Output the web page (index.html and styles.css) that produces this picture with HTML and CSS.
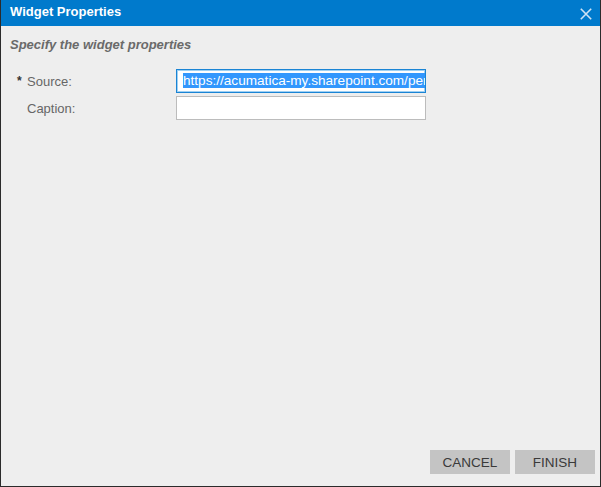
FILE: index.html
```html
<!DOCTYPE html>
<html>
<head>
<meta charset="utf-8">
<title>Widget Properties</title>
<link rel="stylesheet" href="styles.css">
</head>
<body>
<div class="dialog">
  <div class="titlebar">
    <span class="title">Widget Properties</span>
    <span class="close" aria-label="Close">
      <svg width="12" height="12" viewBox="0 0 12 12"><path d="M0.8 0.8 L11.2 11.2 M11.2 0.8 L0.8 11.2" stroke="#cfe3f4" stroke-width="1.6" fill="none"/></svg>
    </span>
  </div>
  <div class="content">
    <div class="subtitle">Specify the widget properties</div>
    <div class="form">
      <div class="row">
        <label class="label"><span class="req">*</span>Source:</label>
        <div class="field focused"><span class="sel">https://acumatica-my.sharepoint.com/per</span></div>
      </div>
      <div class="row">
        <label class="label"><span class="req"></span>Caption:</label>
        <div class="field"></div>
      </div>
    </div>
  </div>
  <div class="footer">
    <button class="btn">CANCEL</button>
    <button class="btn">FINISH</button>
  </div>
</div>
</body>
</html>
```
FILE: styles.css
```css
html, body {
  margin: 0;
  padding: 0;
  background: #eeeeee;
}
.dialog {
  box-sizing: border-box;
  width: 601px;
  height: 487px;
  border: 1px solid #2b2b2b;
  border-top: none;
  background: #eeeeee;
  display: flex;
  flex-direction: column;
  font-family: "Liberation Sans", Arial, sans-serif;
}
.titlebar {
  height: 26px;
  background: #007acc;
  display: flex;
  align-items: center;
  justify-content: space-between;
  padding: 0 8px 0 9px;
  flex-shrink: 0;
}
.title {
  color: #ffffff;
  font-weight: bold;
  font-size: 13px;
  line-height: 16px;
  margin-top: -2px;
}
.close {
  display: flex;
  width: 12px;
  height: 12px;
  margin-top: 2px;
}
.content {
  flex: 1;
  padding: 11px 0 0 0;
}
.subtitle {
  font-size: 13px;
  font-weight: bold;
  font-style: italic;
  color: #6a6a6a;
  line-height: 16px;
  padding-left: 9px;
}
.form {
  margin-top: 16px;
  display: flex;
  flex-direction: column;
  gap: 3px;
}
.row {
  display: flex;
  align-items: center;
}
.label {
  width: 175px;
  box-sizing: border-box;
  padding-left: 16px;
  font-size: 13px;
  color: #666666;
  display: flex;
  align-items: center;
}
.req {
  display: inline-block;
  width: 10px;
  font-size: 12px;
  font-weight: bold;
  color: #333333;
}
.field {
  box-sizing: border-box;
  width: 250px;
  height: 24px;
  background: #ffffff;
  border: 1px solid #bcbcbc;
  overflow: hidden;
  white-space: nowrap;
  font-size: 13.6px;
  line-height: 16px;
  padding: 3px 0 0 6px;
  color: #222;
}
.field.focused {
  border: 1px solid #1a84d4;
  box-shadow: inset 0 0 0 1px #9fd0f3;
}
.sel {
  background: #3297fd;
  color: #ffffff;
}
.footer {
  display: flex;
  justify-content: flex-end;
  gap: 5px;
  padding: 0 5px 12px 0;
}
.btn {
  width: 80px;
  height: 24px;
  border: none;
  background: #c4c4c4;
  color: #3a3a3a;
  font-family: "Liberation Sans", Arial, sans-serif;
  font-size: 13.5px;
  padding: 0;
  margin: 0;
}
```
